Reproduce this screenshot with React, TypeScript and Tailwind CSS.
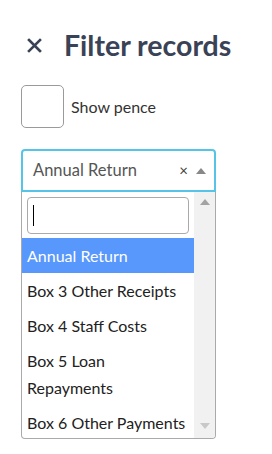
import React from "react";

export default function App() {
  const options = [
    "Annual Return",
    "Box 3 Other Receipts",
    "Box 4 Staff Costs",
    "Box 5 Loan Repayments",
    "Box 6 Other Payments",
  ];
  return (
    <div
      className="w-[272px] h-[454px] bg-white overflow-hidden"
      style={{ fontFamily: "Lato, 'Noto Sans', sans-serif" }}
    >
      <div className="flex items-center pl-[27px] pt-[29px] h-[62px]">
        <svg width="15" height="15" viewBox="0 0 15 15" className="text-[#3a4256]">
          <path d="M2 2 L13 13 M13 2 L2 13" stroke="currentColor" strokeWidth="2.6" strokeLinecap="square" />
        </svg>
        <div className="ml-[22px] text-[28.5px] font-bold text-[#3a4256] leading-none">Filter records</div>
      </div>
      <div className="flex items-center pl-[21px] mt-[23px]">
        <div className="w-[43px] h-[43px] border border-[#9a9a9a] rounded-[5px] bg-white" />
        <div className="ml-[7px] text-[16px] text-[#333]">Show pence</div>
      </div>
      <div className="ml-[21px] mt-[21px] w-[195px]">
        <div className="h-[43px] border-2 border-[#56c4e6] rounded-t-[4px] flex items-center pl-[10px] pr-[8px]">
          <span className="text-[16.5px] text-[#555] flex-1">Annual Return</span>
          <span className="text-[#444] text-[15px] mr-[8px] leading-none">×</span>
          <svg width="10" height="6" viewBox="0 0 10 6">
            <path d="M0 6 L5 0 L10 6 Z" fill="#888" />
          </svg>
        </div>
        <div className="h-[247px] border border-t-0 border-[#aaa] rounded-b-[4px] flex overflow-hidden">
          <div className="w-[172px] flex flex-col">
            <div className="px-[5px] pt-[5px] pb-[4px]">
              <div className="h-[37px] border border-[#aaa] rounded-[4px] flex items-center pl-[5px]">
                <div className="w-px h-[21px] bg-black" />
              </div>
            </div>
            <div className="flex flex-col">
              {options.map((o, i) => (
                <div
                  key={o}
                  className={
                    "px-[5px] py-[4px] leading-[27px] text-[16px] " +
                    (i === 0 ? "bg-[#5897fb] text-white" : "text-[#222]")
                  }
                >
                  {o}
                </div>
              ))}
            </div>
          </div>
          <div className="flex-1 bg-[#f1f1f1] flex flex-col items-center justify-between py-[7px]">
            <svg width="10" height="6" viewBox="0 0 10 6">
              <path d="M0 6 L5 0 L10 6 Z" fill="#a3a3a3" />
            </svg>
            <svg width="10" height="6" viewBox="0 0 10 6" className="mb-[2px]">
              <path d="M0 0 L5 6 L10 0 Z" fill="#c8c8c8" />
            </svg>
          </div>
        </div>
      </div>
    </div>
  );
}
